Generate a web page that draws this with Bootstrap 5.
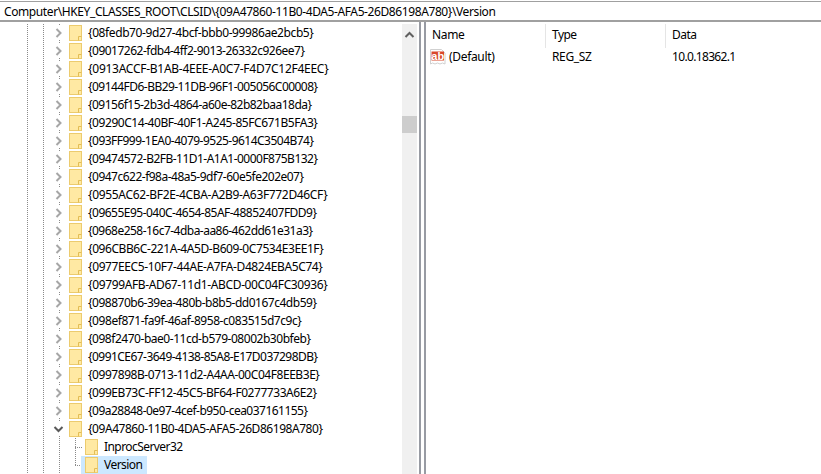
<!DOCTYPE html>
<html><head><meta charset="utf-8">
<link href="https://cdn.jsdelivr.net/npm/bootstrap@5.3.0/dist/css/bootstrap.min.css" rel="stylesheet">
<style>
html,body{height:100%;margin:0;overflow:hidden;background:#fff}
body{font:12px/18px "Noto Sans",sans-serif;color:#000}
.addr{height:21px;margin-top:1px;border-top:1px solid #a0a0a0;border-bottom:2px solid #a0a0a0;padding-left:4px;line-height:19px;white-space:nowrap}
.panes{height:450px;margin-top:2px}
.treepane{width:402px;overflow:hidden;flex:none;
 background-image:repeating-linear-gradient(to bottom,#8a8a8a 0 1px,transparent 1px 2px),repeating-linear-gradient(to bottom,#8a8a8a 0 1px,transparent 1px 2px),repeating-linear-gradient(to bottom,#8a8a8a 0 1px,transparent 1px 2px);
 background-size:1px 100%;background-position:27px 0,43px 0,59px 0;background-repeat:no-repeat}
.trow{height:18px;white-space:nowrap;padding-left:52px}
.chevbox{width:14px;height:14px;flex:none;background:#fff;display:block}
.fold{width:13px;height:16px;flex:none;margin:0 6px 0 3px;display:block}
.sub{padding-left:81px;background-image:repeating-linear-gradient(to bottom,#8a8a8a 0 1px,transparent 1px 2px),repeating-linear-gradient(to right,#8a8a8a 0 1px,transparent 1px 2px);background-repeat:no-repeat;background-size:1px 100%,7px 1px;background-position:75px 0,75px 9px}
.sub .fold{margin:0 6px 0 4px}
.endsub{background-size:1px 10px,7px 1px}
.sel{background:#cce8ff;padding-right:4px;height:18px}
.sbar{width:15px;background:#f0f0f0;flex:none;position:relative}
.sthumb{position:absolute;left:0;right:0;top:92px;height:17px;background:#cdcdcd}
.sbar svg{display:block;margin:6px auto 0}
.split{width:7px;flex:none;border-left:2px solid #989ba3;border-right:2px solid #989ba3;margin-left:2px;margin-top:-2px}
.thead{height:25px}
.hcell{border-right:1px solid #e5e5e5;padding:2px 0 0 6px;height:24px;flex:none}
.vrow{padding-left:4px;margin-top:-1px}
.vicon{width:16px;height:18px;margin-right:3px;flex:none;display:block}
.cname{width:103px;flex:none}
.ctype{width:120px;flex:none}
</style></head><body>
<svg width="0" height="0" style="position:absolute">
<symbol id="fo" viewBox="0 0 13 16"><rect x=".5" y=".5" width="12" height="15" fill="#ffe9a3" stroke="#eccb6e"/><path d="M9.5 15.500v-4h3" fill="#ffe9a3" stroke="#e3bd55"/></symbol>
<symbol id="cr" viewBox="0 0 14 14"><path d="M4.500 3l4 4-4 4" fill="none" stroke="#a6a6a6" stroke-width="2"/></symbol>
<symbol id="cd" viewBox="0 0 14 14"><path d="M2.500 5l4 4 4-4" fill="none" stroke="#595959" stroke-width="2"/></symbol>
</svg>
<div class="addr"><span data-end="495">Computer\HKEY_CLASSES_ROOT\CLSID\{09A47860-11B0-4DA5-AFA5-26D86198A780}\Version</span></div>
<div class="panes d-flex">
<div class="treepane">
<div class="trow d-flex align-items-center"><svg class="chevbox"><use href="#cr"/></svg><svg class="fold"><use href="#fo"/></svg><span data-end="313">{08fedb70-9d27-4bcf-bbb0-99986ae2bcb5}</span></div>
<div class="trow d-flex align-items-center"><svg class="chevbox"><use href="#cr"/></svg><svg class="fold"><use href="#fo"/></svg><span data-end="304">{09017262-fdb4-4ff2-9013-26332c926ee7}</span></div>
<div class="trow d-flex align-items-center"><svg class="chevbox"><use href="#cr"/></svg><svg class="fold"><use href="#fo"/></svg><span data-end="328">{0913ACCF-B1AB-4EEE-A0C7-F4D7C12F4EEC}</span></div>
<div class="trow d-flex align-items-center"><svg class="chevbox"><use href="#cr"/></svg><svg class="fold"><use href="#fo"/></svg><span data-end="317">{09144FD6-BB29-11DB-96F1-005056C00008}</span></div>
<div class="trow d-flex align-items-center"><svg class="chevbox"><use href="#cr"/></svg><svg class="fold"><use href="#fo"/></svg><span data-end="311">{09156f15-2b3d-4864-a60e-82b82baa18da}</span></div>
<div class="trow d-flex align-items-center"><svg class="chevbox"><use href="#cr"/></svg><svg class="fold"><use href="#fo"/></svg><span data-end="317">{09290C14-40BF-40F1-A245-85FC671B5FA3}</span></div>
<div class="trow d-flex align-items-center"><svg class="chevbox"><use href="#cr"/></svg><svg class="fold"><use href="#fo"/></svg><span data-end="313">{093FF999-1EA0-4079-9525-9614C3504B74}</span></div>
<div class="trow d-flex align-items-center"><svg class="chevbox"><use href="#cr"/></svg><svg class="fold"><use href="#fo"/></svg><span data-end="317">{09474572-B2FB-11D1-A1A1-0000F875B132}</span></div>
<div class="trow d-flex align-items-center"><svg class="chevbox"><use href="#cr"/></svg><svg class="fold"><use href="#fo"/></svg><span data-end="303">{0947c622-f98a-48a5-9df7-60e5fe202e07}</span></div>
<div class="trow d-flex align-items-center"><svg class="chevbox"><use href="#cr"/></svg><svg class="fold"><use href="#fo"/></svg><span data-end="327">{0955AC62-BF2E-4CBA-A2B9-A63F772D46CF}</span></div>
<div class="trow d-flex align-items-center"><svg class="chevbox"><use href="#cr"/></svg><svg class="fold"><use href="#fo"/></svg><span data-end="316">{09655E95-040C-4654-85AF-48852407FDD9}</span></div>
<div class="trow d-flex align-items-center"><svg class="chevbox"><use href="#cr"/></svg><svg class="fold"><use href="#fo"/></svg><span data-end="312">{0968e258-16c7-4dba-aa86-462dd61e31a3}</span></div>
<div class="trow d-flex align-items-center"><svg class="chevbox"><use href="#cr"/></svg><svg class="fold"><use href="#fo"/></svg><span data-end="323">{096CBB6C-221A-4A5D-B609-0C7534E3EE1F}</span></div>
<div class="trow d-flex align-items-center"><svg class="chevbox"><use href="#cr"/></svg><svg class="fold"><use href="#fo"/></svg><span data-end="322">{0977EEC5-10F7-44AE-A7FA-D4824EBA5C74}</span></div>
<div class="trow d-flex align-items-center"><svg class="chevbox"><use href="#cr"/></svg><svg class="fold"><use href="#fo"/></svg><span data-end="327">{09799AFB-AD67-11d1-ABCD-00C04FC30936}</span></div>
<div class="trow d-flex align-items-center"><svg class="chevbox"><use href="#cr"/></svg><svg class="fold"><use href="#fo"/></svg><span data-end="316">{098870b6-39ea-480b-b8b5-dd0167c4db59}</span></div>
<div class="trow d-flex align-items-center"><svg class="chevbox"><use href="#cr"/></svg><svg class="fold"><use href="#fo"/></svg><span data-end="301">{098ef871-fa9f-46af-8958-c083515d7c9c}</span></div>
<div class="trow d-flex align-items-center"><svg class="chevbox"><use href="#cr"/></svg><svg class="fold"><use href="#fo"/></svg><span data-end="310">{098f2470-bae0-11cd-b579-08002b30bfeb}</span></div>
<div class="trow d-flex align-items-center"><svg class="chevbox"><use href="#cr"/></svg><svg class="fold"><use href="#fo"/></svg><span data-end="317">{0991CE67-3649-4138-85A8-E17D037298DB}</span></div>
<div class="trow d-flex align-items-center"><svg class="chevbox"><use href="#cr"/></svg><svg class="fold"><use href="#fo"/></svg><span data-end="319">{0997898B-0713-11d2-A4AA-00C04F8EEB3E}</span></div>
<div class="trow d-flex align-items-center"><svg class="chevbox"><use href="#cr"/></svg><svg class="fold"><use href="#fo"/></svg><span data-end="316">{099EB73C-FF12-45C5-BF64-F0277733A6E2}</span></div>
<div class="trow d-flex align-items-center"><svg class="chevbox"><use href="#cr"/></svg><svg class="fold"><use href="#fo"/></svg><span data-end="307">{09a28848-0e97-4cef-b950-cea037161155}</span></div>
<div class="trow d-flex align-items-center"><svg class="chevbox"><use href="#cd"/></svg><svg class="fold"><use href="#fo"/></svg><span data-end="322">{09A47860-11B0-4DA5-AFA5-26D86198A780}</span></div>
<div class="trow sub d-flex align-items-center"><svg class="fold"><use href="#fo"/></svg><span data-end="182">InprocServer32</span></div>
<div class="trow sub endsub d-flex align-items-center"><div class="sel d-flex align-items-center"><svg class="fold"><use href="#fo"/></svg><span data-end="142">Version</span></div></div>
</div>
<div class="sbar"><svg width="15" height="9" viewBox="0 0 15 9"><path d="M3.500 7l4-4 4 4" fill="none" stroke="#606060" stroke-width="2"/></svg><div class="sthumb"></div></div>
<div class="split"></div>
<div class="flex-grow-1">
<div class="thead d-flex"><div class="hcell" style="width:120px"><span data-end="464">Name</span></div><div class="hcell" style="width:120px"><span data-end="576">Type</span></div><div class="hcell border-0"><span data-end="696">Data</span></div></div>
<div class="vrow d-flex align-items-center"><svg class="vicon" viewBox="0 0 16 18"><path d="M.5 1.500h11l3.500 3.500v11l-2.500-1-2.500 1-2.500-1-2.500 1-2.500-1-2 1z" fill="#fff" stroke="#d0d0d0"/><rect x="1.500" y="3.500" width="12.500" height="9" fill="#d9482b"/><text x="7.700" y="11.800" text-anchor="middle" font-family="Liberation Sans" font-weight="700" font-size="11" fill="#fff">ab</text></svg><span class="cname"><span data-end="494">(Default)</span></span><span class="ctype"><span data-end="591">REG_SZ</span></span><span data-end="735">10.0.18362.1</span></div>
</div>
</div>
<script>
document.querySelectorAll('[data-end]').forEach(function(el){
  var r=el.getBoundingClientRect().right, n=el.textContent.length;
  el.style.letterSpacing=((+el.dataset.end+0.5-r)/n).toFixed(3)+'px';
});
</script>
</body></html>
